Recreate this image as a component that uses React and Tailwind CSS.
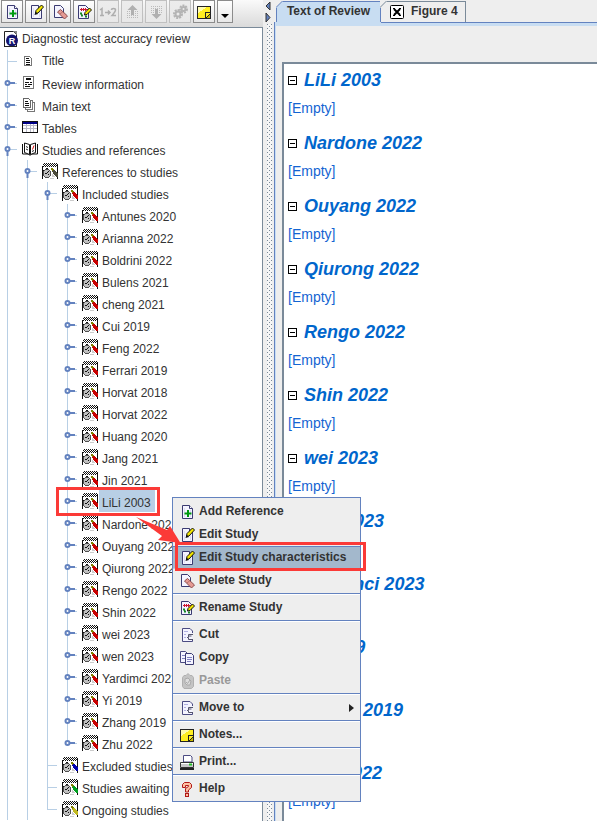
import React from "react";

/* ---------- pixel icons ---------- */

const NOTEBOOK = [
  "..K.K.K.K.K.K.K.",
  ".K.K.K.K.K.K.K.K",
  "..K.K.K.K.K.K.KK",
  "KKwKwKwKwKwKwKwK",
  "KwwwwwwwwwwwwwwK",
  "KwwwKKwwwOOwwwwK",
  "KwwDDDDwwOOOwwwK",
  "KKDGGGGDwwORRwwK",
  "KDGGGGKGDwRRRRwK",
  "KDGGGKGGDwwRRRRK",
  "KDGKKGGGDwwRRRRR",
  "KDGGGGKGDwLwRRRR",
  "KDGGGGGGDwLLwRRR",
  "KwDGGGGDwwLLLwRR",
  "KwwDDDDwwwwwwwwK",
  "KwwwwwwwLLLLwwwK",
];

const PIXEL_COLORS = { K: "#111", w: "#fff", G: "#c0c0c0", D: "#505050", O: "#808000", L: "#ccc" };

function Notebook({ pen = "#c80000" }) {
  return (
    <svg width="16" height="16" viewBox="0 0 16 16" shapeRendering="crispEdges" aria-hidden="true">
      {NOTEBOOK.flatMap((row, y) =>
        [...row].map((c, x) =>
          c === "." ? null : (
            <rect key={`${x}-${y}`} x={x} y={y} width="1" height="1" fill={c === "R" ? pen : PIXEL_COLORS[c]} />
          )
        )
      )}
    </svg>
  );
}

function Icon({ children, crisp = false }) {
  return (
    <svg width="16" height="16" viewBox="0 0 16 16" fill="none" className="shrink-0" shapeRendering={crisp ? "crispEdges" : "auto"} aria-hidden="true">
      {children}
    </svg>
  );
}

const Page = () => (
  <>
    <path d="M3.500 1.500h7l3 3v10h-10z" fill="#f4f4ff" stroke="#3b3b72" />
    <path d="M10.500 1.500v3h3" fill="#fff" stroke="#3b3b72" />
    <path d="M5.500 4v9M11.500 6v7" stroke="#dcdcf5" />
  </>
);

const Pencil = () => (
  <>
    <path d="M7.500 9.500l.5-3 5.500-5.500 2 2-5.500 6z" fill="#f2e600" stroke="#111" />
    <path d="M6.500 11l1-3.500 2.500 2.500z" fill="#111" />
  </>
);

const AddIcon = () => (
  <Icon>
    <Page />
    <path d="M9 6v7M5.500 9.500h7" stroke="#009a10" strokeWidth="2" />
  </Icon>
);
const EditIcon = () => (
  <Icon>
    <Page />
    <Pencil />
  </Icon>
);
const DeleteIcon = () => (
  <Icon>
    <path d="M2.500 1.500h6l3 3v9h-9z" fill="#f4f4ff" stroke="#3b3b72" />
    <path d="M5.500 8l3-2.500 7 6.500-3 3z" fill="#e59a93" stroke="#8c4c4c" />
    <path d="M8 10l3-2.500" stroke="#b8706a" />
  </Icon>
);
const RenameIcon = () => (
  <Icon>
    <path d="M2.500 1.500h7l3 3v10h-10z" fill="#f4f4ff" stroke="#3b3b72" />
    <path d="M4 5.500h8M5.500 4v3M7.500 4v3M9.500 4v3" stroke="#d01830" />
    <path d="M4 9.500h2M5 11.500h2M9 12.500h2" stroke="#188a28" strokeWidth="2" />
    <path d="M8.500 11l.5-2.500L13.500 4l2 2-4.500 4.500z" fill="#f2e600" stroke="#111" />
  </Icon>
);
const CutIcon = () => (
  <Icon>
    <path d="M13.500 6V4l-2.500-2.500H3.500v13h10v-2" fill="#f4f4ff" stroke="#4b4b82" />
    <path d="M5 4.500h4M5 7.500h2M5 10.500h2" stroke="#b0b0e0" />
    <path d="M14 7.500H9.500v2.500M12.500 9H9M8 10.500h1.500v2H14" stroke="#55556c" />
  </Icon>
);
const CopyIcon = () => (
  <Icon>
    <path d="M1.500 1.500h5l2 2v9h-7z" fill="#f4f4ff" stroke="#4b4b82" />
    <path d="M6.500 3.500h6l2 2v9h-8z" fill="#f4f4ff" stroke="#3b3b72" />
    <path d="M3 5.500h3M3 8.500h3M8 7.500h5M8 9.500h5M8 11.500h4" stroke="#8080c0" />
  </Icon>
);
const PasteIcon = () => (
  <Icon>
    <path d="M5 2.500h2l2-2 2 2h2l1.500 2v9l-2 2H5l-1.500-2v-9z" fill="#c4c4c4" stroke="#b0b0b0" />
    <path d="M6 6l3-1 3 3-1 4H8L6 10z" fill="#ddd" stroke="#aaa" />
    <path d="M7 9l1.500 1.500L11 7" stroke="#aaa" />
  </Icon>
);
const NoteIcon = () => (
  <Icon crisp>
    <rect x="1.500" y="2.500" width="13" height="12" fill="#ffee22" stroke="#222" />
    <path d="M2 3h9l-9 6z" fill="#fffbb0" />
    <path d="M9.500 14V8.500H14" stroke="#222" />
    <path d="M10 14l4-4v4z" fill="#c8b800" stroke="#222" />
  </Icon>
);
const PrintIcon = () => (
  <Icon>
    <path d="M4.500 8V1.500h7l1.500 1.500v5z" fill="#fff" stroke="#4b4b82" />
    <path d="M1.500 8.500h13v5h-13z" fill="#c8c8c8" stroke="#333" />
    <path d="M1 15h14" stroke="#222" strokeWidth="2" />
    <path d="M2 9.500h12" stroke="#fff" />
    <path d="M10 10.500h3" stroke="#20c020" strokeWidth="2" />
  </Icon>
);
const HelpIcon = () => (
  <Icon>
    <path d="M3.500 6.500V3.500l2-2h5l2 2v3l-3 2.500v2h-3V7.500l3-2V4.500h-3v2z" fill="#ffc0a0" stroke="#b01818" />
    <rect x="6.500" y="12.500" width="3" height="3" fill="#ffc0a0" stroke="#b01818" />
  </Icon>
);
const NumberIcon = () => (
  <svg width="18" height="16" viewBox="0 0 18 16" className="shrink-0" aria-hidden="true">
    <path d="M1 6l2-1.500v7M1 11.500h4M6 8.500h4M9 6.500l2 2-2 2M12.500 6q0-1.500 2-1.500t2 1.500-3.500 5.500H17" fill="none" stroke="#aeaeae" strokeWidth="1.500" />
  </svg>
);
const UpIcon = () => (
  <Icon>
    <path d="M3 7.500h11M3 9.500h11M3 11.500h11M3 13.500h11" stroke="#bbb" strokeDasharray="1 1" />
    <path d="M8.500 1l5 5H10v5H7V6H3.500z" fill="#b0b0b0" />
  </Icon>
);
const DownIcon = () => (
  <Icon>
    <path d="M3 2.500h11M3 4.500h11M3 6.500h11M3 8.500h11" stroke="#bbb" strokeDasharray="1 1" />
    <path d="M8.500 15l5-5H10V5H7v5H3.500z" fill="#b0b0b0" />
  </Icon>
);
const GearIcon = () => (
  <Icon>
    <circle cx="6" cy="10" r="4" stroke="#b4b4b4" strokeWidth="2" strokeDasharray="2 1" />
    <circle cx="6" cy="10" r="2.500" stroke="#b4b4b4" strokeWidth="2" />
    <circle cx="11.500" cy="5" r="3.500" stroke="#b4b4b4" strokeWidth="2" strokeDasharray="2 1" />
    <circle cx="11.500" cy="5" r="2" stroke="#b4b4b4" strokeWidth="2" />
  </Icon>
);

const ReviewIcon = () => (
  <Icon>
    <path d="M.5 15V.5h9l3 3V15" fill="#fff" stroke="#222" />
    <path d="M9 0h4v4z" fill="#888" />
    <circle cx="8" cy="9.500" r="6" fill="#14146e" />
    <path d="M0 15.500h13" stroke="#222" />
    <text x="8" y="13" textAnchor="middle" fontSize="9" fontWeight="700" fill="#fff" fontFamily="Liberation Sans, sans-serif">R</text>
  </Icon>
);
const TitleIcon = () => (
  <Icon crisp>
    <path d="M2.500 3.500h5l2 2v7h-7z" fill="#fff" stroke="#777" />
    <path d="M4 5.500h3M4 7.500h4M4 9.500h4M4 11h4" stroke="#111" />
  </Icon>
);
const InfoIcon = () => (
  <Icon crisp>
    <path d="M1.500 1.500h10v12h-10z" fill="#fff" stroke="#777" />
    <path d="M3 7.500h4M8 7.500h2M3 9.500h2M6 9.500h4M3 11.500h5" stroke="#111" />
    <path d="M4 4h5" stroke="#111" strokeWidth="2" />
  </Icon>
);
const TextIcon = () => (
  <Icon crisp>
    <path d="M5.500 5.500h7v9h-7z" fill="#fff" stroke="#777" />
    <path d="M3.500 3.500h7v9h-7z" fill="#fff" stroke="#777" />
    <path d="M1.500 1.500h5l2 2v7h-7z" fill="#fff" stroke="#666" />
    <path d="M3 4.500h3M3 6.500h4M3 8.500h4" stroke="#111" />
  </Icon>
);
const TableIcon = () => (
  <Icon crisp>
    <rect x="0.500" y="2.500" width="15" height="11" fill="#fff" stroke="#111" />
    <path d="M1 6.500h14M1 9.500h14M4.500 5v8M8.500 5v8M11.500 5v8" stroke="#b8b8c8" />
    <path d="M1 4h14" stroke="#00008a" strokeWidth="2" />
    <path d="M0 13.500h16" stroke="#111" />
  </Icon>
);
const BookIcon = () => (
  <Icon>
    <path d="M.5 3v10h6l1.500 1.500L9.500 13h6V3" fill="#fff" stroke="#111" />
    <path d="M2.500 2v9.500L7.500 13.500V3.500zM13.500 2v9.500L8.500 13.500V3.500z" fill="#fff" stroke="#111" />
    <path d="M4 5.500l2 1M4 8l2 1" stroke="#222" />
    <path d="M12 4.500l-1.500 4" stroke="#e01010" />
    <path d="M10 10.500l2-1" stroke="#222" />
  </Icon>
);

/* ---------- tree ---------- */

const STUDIES = [
  "Antunes 2020", "Arianna 2022", "Boldrini 2022", "Bulens 2021", "cheng 2021", "Cui 2019", "Feng 2022",
  "Ferrari 2019", "Horvat 2018", "Horvat 2022", "Huang 2020", "Jang 2021", "Jin 2021", "LiLi 2003",
  "Nardone 2022", "Ouyang 2022", "Qiurong 2022", "Rengo 2022", "Shin 2022", "wei 2023", "wen 2023",
  "Yardimci 2023", "Yi 2019", "Zhang 2019", "Zhu 2022",
];

const ROWS = [
  { level: 1, handle: "closed", icon: <InfoIcon />, text: "Review information" },
  { level: 1, handle: "closed", icon: <TextIcon />, text: "Main text" },
  { level: 1, handle: "closed", icon: <TableIcon />, text: "Tables" },
  { level: 1, handle: "open", icon: <BookIcon />, text: "Studies and references" },
  { level: 2, handle: "open", icon: <Notebook pen="#4a4a3a" />, text: "References to studies" },
  { level: 3, handle: "open", icon: <Notebook />, text: "Included studies" },
  ...STUDIES.map((text) => ({
    level: 4, handle: "closed", icon: <Notebook />, text, selected: text === "LiLi 2003", last: text === "Zhu 2022",
  })),
  { level: 3, icon: <Notebook pen="#0000b0" />, text: "Excluded studies" },
  { level: 3, icon: <Notebook pen="#00a020" />, text: "Studies awaiting" },
  { level: 3, icon: <Notebook pen="#c0b820" />, text: "Ongoing studies", last: true },
];

function Branch({ state, last }) {
  return (
    <svg width="20" height="22" viewBox="0 0 20 22" fill="none" className="shrink-0" aria-hidden="true">
      <path d={last ? "M7.500 0v11" : "M7.500 0v22"} stroke="#b8cfe5" shapeRendering="crispEdges" />
      {state !== "none" && <path d="M7 11.500h10" stroke="#b8cfe5" />}
      {state === "closed" && (
        <>
          <path d="M10 11h5" stroke="#6382bf" strokeWidth="2" />
          <circle cx="7.500" cy="11" r="2" fill="#fff" stroke="#6382bf" strokeWidth="2" />
        </>
      )}
      {state === "open" && (
        <>
          <path d="M7.500 13v5" stroke="#6382bf" strokeWidth="2" />
          <circle cx="7.500" cy="11" r="2" fill="#fff" stroke="#6382bf" strokeWidth="2" />
        </>
      )}
    </svg>
  );
}

function TreeRow({ level, handle, icon, text, selected, last, high }) {
  return (
    <li role="treeitem" aria-level={level + 1} aria-selected={!!selected} className="flex h-[22px] items-center whitespace-nowrap">
      {Array.from({ length: level - 1 }, (_, i) => (
        <Branch key={i} state="none" />
      ))}
      {handle ? (
        <button type="button" aria-label={`${handle === "open" ? "Collapse" : "Expand"} ${text}`} className="w-5 shrink-0">
          <Branch state={handle} last={last} />
        </button>
      ) : (
        <Branch state="leaf" last={last} />
      )}
      <span className="ml-0.5 w-4 shrink-0">{icon}</span>
      <span className={`ml-px h-full pr-1 pl-[3px] ${high ? "pt-[3px]" : "pt-[5px]"} leading-4 ${selected ? "bg-[#b8cfe5]" : ""}`}>{text}</span>
    </li>
  );
}

const TOOLS = [
  ["Add", <AddIcon />], ["Edit", <EditIcon />], ["Delete", <DeleteIcon />], ["Rename", <RenameIcon />],
  ["Renumber", <NumberIcon />, true], ["Move up", <UpIcon />, true], ["Move down", <DownIcon />, true],
  ["Properties", <GearIcon />, true], ["Notes", <NoteIcon />],
];

function Toolbar() {
  return (
    <div role="toolbar" className="flex h-[27px] shrink-0 items-start gap-0.5 bg-linear-to-b from-[#fafafa] to-[#dadada] pl-px">
      {TOOLS.map(([label, icon, disabled]) => (
        <button
          key={label}
          type="button"
          aria-label={label}
          disabled={disabled}
          className="flex h-[23px] w-[22px] items-center justify-center border border-[#8c8c8c] bg-linear-to-b from-white to-[#e8e8e8] disabled:border-[#c0c0c0] disabled:from-[#ececec]"
        >
          {icon}
        </button>
      ))}
      <button type="button" aria-label="More notes options" className="flex h-[23px] w-4 items-end justify-center border border-[#8c8c8c] bg-linear-to-b from-white to-[#e8e8e8] pb-1">
        <svg width="8" height="4" viewBox="0 0 8 4" aria-hidden="true"><path d="M0 0h8L4 4z" fill="#000" /></svg>
      </button>
    </div>
  );
}

/* ---------- splitter, tabs, review ---------- */

function Splitter() {
  return (
    <div role="separator" aria-orientation="vertical" className="w-[11px] shrink-0 bg-[#eee]">
      <svg width="11" height="100%" aria-hidden="true">
        <defs>
          <pattern id="bumps" width="4" height="4" patternUnits="userSpaceOnUse">
            <rect width="4" height="4" fill="#f6f6f6" />
            <rect width="1" height="1" fill="#7a8a99" />
            <rect x="2" y="2" width="1" height="1" fill="#7a8a99" />
          </pattern>
        </defs>
        <rect x="4" y="24" width="5" height="100%" fill="url(#bumps)" />
        <path d="M7 2v8L3 6z" fill="#6382bf" stroke="#333" strokeWidth="1" />
        <path d="M3 13v9l4-4.500z" fill="#6382bf" stroke="#333" strokeWidth="1" />
      </svg>
    </div>
  );
}

const Corner = ({ stroke, fill }) => (
  <svg width="7" height="7" viewBox="0 0 7 7" className="absolute -top-px -left-px" aria-hidden="true">
    <path d="M0 0h7L0 7z" fill="#eee" />
    <path d="M7 0v7H0z" fill={fill} />
    <path d="M0 6.500L6.500 0" stroke={stroke} />
  </svg>
);

const SECTIONS = [
  "LiLi 2003", "Nardone 2022", "Ouyang 2022", "Qiurong 2022", "Rengo 2022", "Shin 2022", "wei 2023",
  "wen 2023", "Yardimci 2023", "Yi 2019", "Zhang 2019", "Zhu 2022",
];

function ReviewPane() {
  return (
    <main className="flex min-w-0 flex-1 flex-col bg-[#eee]">
      <div role="tablist" className="flex h-[22px] shrink-0 pt-px pl-0.5 text-xs font-bold leading-4">
        <button role="tab" aria-selected="true" type="button" className="relative flex w-[105px] justify-center border border-b-0 border-[#6382bf] bg-[#c8ddf2] pt-px">
          <Corner stroke="#6382bf" fill="#c8ddf2" />
          Text of Review
        </button>
        <div className="relative flex w-[85px] border-t border-r border-[#7a8a99] pt-px pl-[9px]">
          <Corner stroke="#7a8a99" fill="#eee" />
          <button type="button" aria-label="Close Figure 4" className="mt-0.5 size-[14px]">
            <svg width="14" height="14" viewBox="0 0 14 14" aria-hidden="true">
              <rect x=".5" y=".5" width="13" height="13" rx="1" fill="#fff" stroke="#000" />
              <path d="M4 4l6 6M10 4l-6 6" stroke="#000" strokeWidth="2" />
              <path d="M3 3.500h2M9 3.500h2M3 10.500h2M9 10.500h2" stroke="#000" />
            </svg>
          </button>
          <button role="tab" aria-selected="false" type="button" className="ml-[7px] h-4">Figure 4</button>
        </div>
      </div>
      <div className="flex min-h-0 flex-1 flex-col border-l border-[#6382bf]">
        <div className="flex h-1 shrink-0">
          <div className="w-[106px] bg-[#c8ddf2]" />
          <div className="flex-1 border-t border-[#6382bf] bg-[#c8ddf2]" />
        </div>
        <div className="flex min-h-0 flex-1 border-l border-[#c8ddf2] pt-9 pl-1.5">
          <div className="min-w-0 flex-1 overflow-hidden border-t-2 border-l-2 border-[#7a8a99] bg-white pt-1.5 pl-1 text-[#0066cc]">
            {SECTIONS.map((name) => (
              <section key={name} className="mb-[17px]">
                <div className="flex items-center gap-[7px]">
                  <button type="button" aria-label={`Collapse ${name}`} className="flex size-[9px] items-center justify-center border border-black bg-white">
                    <span className="h-px w-[5px] bg-black" />
                  </button>
                  <h2 className="text-lg leading-5 font-bold italic">{name}</h2>
                </div>
                <p className="mt-2.5 text-sm leading-4 text-[#1464d2]">[Empty]</p>
              </section>
            ))}
          </div>
        </div>
      </div>
    </main>
  );
}

/* ---------- context menu ---------- */

const MENU = [
  [["Add Reference", <AddIcon />], ["Edit Study", <EditIcon />], ["Edit Study characteristics", <EditIcon />, "active"], ["Delete Study", <DeleteIcon />]],
  [["Rename Study", <RenameIcon />]],
  [["Cut", <CutIcon />], ["Copy", <CopyIcon />], ["Paste", <PasteIcon />, "disabled"]],
  [["Move to", <CutIcon />, "submenu"]],
  [["Notes...", <NoteIcon />]],
  [["Print...", <PrintIcon />]],
  [["Help", <HelpIcon />]],
];

const ITEM_STATE = {
  active: "border-y border-t-[#6382bf] border-b-[#b8cfe5] bg-[#a3b8cc]",
  disabled: "text-[#999]",
};

function ContextMenu() {
  return (
    <div role="menu" className="absolute top-[497px] left-[172px] w-[189px] border border-[#6382bf] bg-[#eee] pt-0.5 text-xs leading-4 font-bold">
      {MENU.map((group, i) => (
        <div key={i} role="group" className={i === 0 ? "pb-px" : "border-t border-[#6382bf]"}>
          <div className={i === 0 ? "" : "border-t border-white py-px"}>
            {group.map(([label, icon, state]) => (
              <button
                key={label}
                type="button"
                role="menuitem"
                disabled={state === "disabled"}
                className={`flex h-[23px] w-full items-center gap-1 pl-1.5 text-left ${ITEM_STATE[state] || ""}`}
              >
                {icon}
                <span className="flex-1 pb-0.5">{label}</span>
                {state === "submenu" && (
                  <svg width="5" height="8" viewBox="0 0 5 8" className="mr-1.5" aria-hidden="true"><path d="M0 0l5 4-5 4z" fill="#222" /></svg>
                )}
              </button>
            ))}
          </div>
        </div>
      ))}
    </div>
  );
}

export default function App() {
  return (
    <div className="relative flex h-screen overflow-hidden bg-[#eee] font-['Liberation_Sans',Arial,sans-serif] text-xs text-[#333]">
      <aside className="flex w-[263px] shrink-0 flex-col">
        <Toolbar />
        <div className="min-h-0 flex-1 overflow-hidden border-t border-r border-[#7a8a99] bg-white">
          <ul role="tree">
            <li role="treeitem" aria-level={1} className="flex h-[22px] items-center gap-0.5 pl-1">
              <ReviewIcon />
              <span className="h-full pt-[3px] leading-4">Diagnostic test accuracy review</span>
            </li>
            <TreeRow level={1} icon={<TitleIcon />} text="Title" high />
            {ROWS.map((row) => (
              <TreeRow key={row.text} {...row} />
            ))}
          </ul>
        </div>
      </aside>
      <Splitter />
      <ReviewPane />
      <ContextMenu />

      {/* annotation: highlighted study, arrow and menu entry */}
      <div className="pointer-events-none absolute top-[487px] left-[56px] h-[29px] w-[104px] border-3 border-[#fb3a37]" />
      <svg width="46" height="28" viewBox="0 0 46 28" className="pointer-events-none absolute top-[516px] left-[135px]" aria-hidden="true">
        <path d="M1 1l31 13 3-4 10.500 17L23 24l4-4z" fill="#fb3a37" />
      </svg>
      <div className="pointer-events-none absolute top-[542px] left-[175px] h-[29px] w-[191px] border-3 border-[#fb3a37]" />
    </div>
  );
}
